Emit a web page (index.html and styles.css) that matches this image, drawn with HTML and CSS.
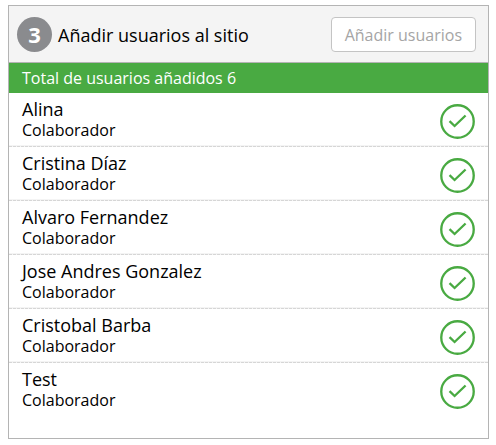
FILE: index.html
```html
<!DOCTYPE html>
<html lang="es">
<head>
<meta charset="utf-8">
<title>Añadir usuarios al sitio</title>
<link rel="stylesheet" href="styles.css">
</head>
<body>
<svg class="defs" aria-hidden="true">
  <symbol id="check" viewBox="0 0 36 36">
    <circle cx="18" cy="18" r="16.7" stroke-width="2.4"/>
    <path d="M9.8 17.6 15 22.6 26.3 11.8" stroke-width="2.4"/>
  </symbol>
</svg>
<section class="panel">
  <header class="panel-header">
    <span class="step">3</span>
    <h1 class="title">Añadir usuarios al sitio</h1>
    <button class="add" type="button">Añadir usuarios</button>
  </header>
  <p class="total">Total de usuarios añadidos 6</p>
  <ul class="users">
    <li class="user"><div><p class="name">Alina</p><p class="role">Colaborador</p></div><svg class="check"><use href="#check"/></svg></li>
    <li class="user"><div><p class="name">Cristina Díaz</p><p class="role">Colaborador</p></div><svg class="check"><use href="#check"/></svg></li>
    <li class="user"><div><p class="name">Alvaro Fernandez</p><p class="role">Colaborador</p></div><svg class="check"><use href="#check"/></svg></li>
    <li class="user"><div><p class="name">Jose Andres Gonzalez</p><p class="role">Colaborador</p></div><svg class="check"><use href="#check"/></svg></li>
    <li class="user"><div><p class="name">Cristobal Barba</p><p class="role">Colaborador</p></div><svg class="check"><use href="#check"/></svg></li>
    <li class="user"><div><p class="name">Test</p><p class="role">Colaborador</p></div><svg class="check"><use href="#check"/></svg></li>
  </ul>
</section>
</body>
</html>
```
FILE: styles.css
```css
* {
  box-sizing: border-box;
}

body {
  margin: 5px 7px 6px 8px;
  background: #fff;
  color: #000;
  font-family: "Open Sans", "Noto Sans", sans-serif;
  font-size: 16px;
}

h1, p, ul {
  margin: 0;
  padding: 0;
}

.defs {
  position: absolute;
  width: 0;
  height: 0;
}

.panel {
  border: 1px solid #b4b4b4;
  padding-bottom: 21px;
}

.panel-header {
  display: flex;
  align-items: center;
  gap: 6px;
  padding: 11px 12px 10px 8px;
  background: #f4f4f4;
  border-bottom: 1px solid #b4b4b4;
}

.step {
  flex: none;
  width: 35px;
  height: 35px;
  border-radius: 50%;
  background: #8a8b8e;
  color: #fff;
  font-size: 22px;
  font-weight: 700;
  line-height: 35px;
  text-align: center;
}

.title {
  flex: 1;
  font-size: 18px;
  font-weight: 400;
  line-height: 24px;
  white-space: nowrap;
}

.add {
  height: 35px;
  padding: 0 13px;
  border: 1px solid #c4c4c4;
  border-radius: 4px;
  background: #fff;
  color: #a5a5a5;
  font: inherit;
  white-space: nowrap;
}

.total {
  padding: 0 13px;
  background: #49aa42;
  color: #fff;
  line-height: 30px;
}

.users {
  list-style: none;
}

.user {
  display: flex;
  align-items: flex-start;
  justify-content: space-between;
  height: 54px;
  padding: 5px 13px 0 13px;
}

/* Fine dashes under a pale line */
.user:not(:last-child) {
  background:
    repeating-linear-gradient(90deg, #d6d6d6 0 3px, #f4f4f4 3px 4px) left bottom / 100% 1px no-repeat,
    linear-gradient(#f4f4f4, #f4f4f4) left bottom / 100% 2px no-repeat;
}

.name {
  font-size: 18px;
  line-height: 22px;
}

.role {
  font-size: 16px;
  line-height: 20px;
}

.check {
  flex: none;
  width: 35px;
  height: 35px;
  margin-top: 6px;
  fill: none;
  stroke: #49aa42;
}
```
